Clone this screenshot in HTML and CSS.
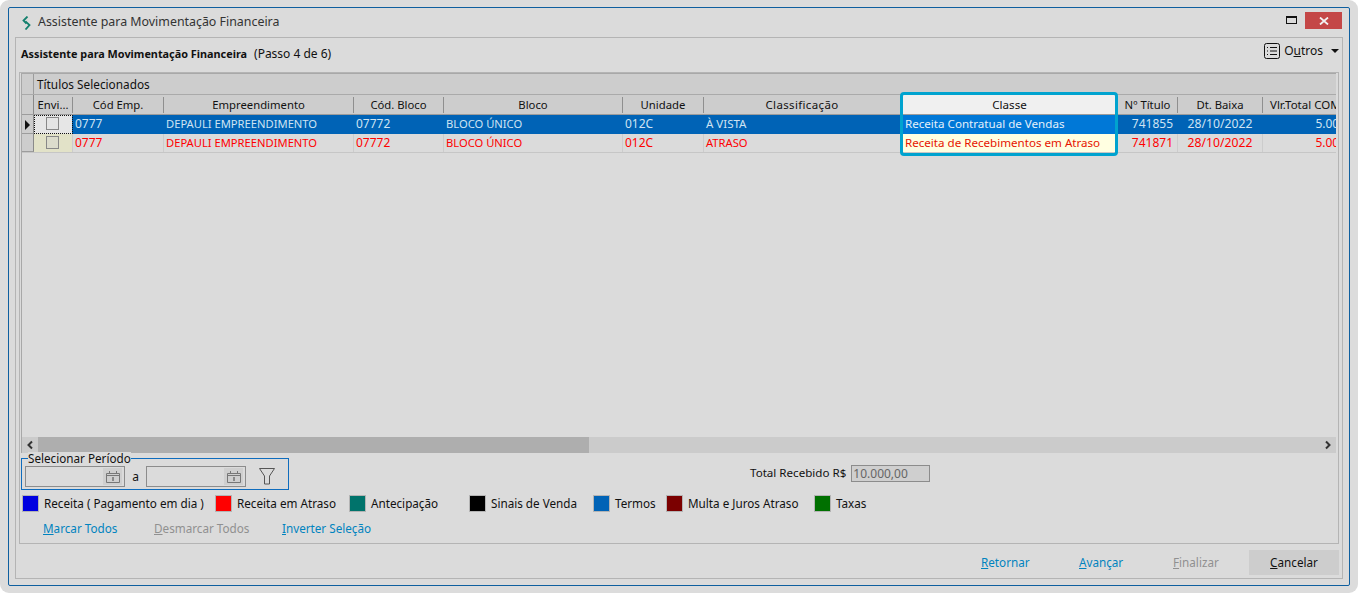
FILE: index.html
```html
<!DOCTYPE html>
<html lang="pt-BR">
<head>
<meta charset="utf-8">
<title>Assistente para Movimentação Financeira</title>
<link rel="stylesheet" href="styles.css">
</head>
<body>
<div class="frame">
  <div class="window">
    <header class="titlebar">
      <svg class="logo" width="9" height="14" viewBox="0 0 9 14"><path d="M5.500.5 1.500 4.500 4.500 7.500" fill="none" stroke="#14806e" stroke-width="1.800"/><path d="M3.500 5.500 7.500 9 3.500 13.500" fill="none" stroke="#14806e" stroke-width="1.800"/></svg>
      <span class="title">Assistente para Movimentação Financeira</span>
      <svg class="max" width="11" height="8" viewBox="0 0 11 8"><rect x=".5" y=".5" width="10" height="7" fill="none" stroke="#111"/><rect width="11" height="2" fill="#111"/></svg>
      <div class="close"><svg width="10" height="8" viewBox="0 0 10 8"><path d="M1 .5l8 7M9 .5l-8 7" stroke="#f2f2f2" stroke-width="1.800"/></svg></div>
    </header>
    <div class="panel">
      <div class="heading">
        <span class="heading-text"><b>Assistente para Movimentação Financeira</b><span class="step">(Passo 4 de 6)</span></span>
        <div class="outros">
          <svg width="16" height="16" viewBox="0 0 16 16"><rect x=".5" y=".5" width="15" height="15" rx="2" fill="none" stroke="#111"/><path d="M3 4.500h1M3 8h1M3 11.500h1M6 4.500h7M6 8h7M6 11.500h7" stroke="#111"/></svg>
          <span>O<u>u</u>tros</span>
          <i class="caret"></i>
        </div>
      </div>
      <div class="gridbox">
        <div class="grid">
          <div class="band"><div class="corner"></div><div class="band-text">Títulos Selecionados</div></div>
          <div class="row head">
            <div class="ind"></div>
            <div class="c c1">Envi...</div><div class="c c2">Cód Emp.</div><div class="c c3">Empreendimento</div><div class="c c4">Cód. Bloco</div><div class="c c5">Bloco</div><div class="c c6">Unidade</div><div class="c c7 wide">Classificação</div><div class="c c8 hl">Classe</div><div class="c c9">Nº Título</div><div class="c c10">Dt. Baixa</div><div class="c c11">Vlr.Total COMISSÃO</div>
          </div>
          <div class="row sel">
            <div class="ind"><i class="arrow"></i></div>
            <div class="c c1 focus"><i class="check"></i></div><div class="c c2 num">0777</div><div class="c c3 caps">DEPAULI EMPREENDIMENTO</div><div class="c c4 num">07772</div><div class="c c5 caps">BLOCO ÚNICO</div><div class="c c6 num">012C</div><div class="c c7">À VISTA</div><div class="c c8 hl">Receita Contratual de Vendas</div><div class="c c9 r num">741855</div><div class="c c10 m">28/10/2022</div><div class="c c11 r num">5.000,00</div>
          </div>
          <div class="row late">
            <div class="ind"></div>
            <div class="c c1 tint"><i class="check"></i></div><div class="c c2 num">0777</div><div class="c c3 caps">DEPAULI EMPREENDIMENTO</div><div class="c c4 num">07772</div><div class="c c5 caps">BLOCO ÚNICO</div><div class="c c6 num">012C</div><div class="c c7 caps">ATRASO</div><div class="c c8 hl">Receita de Recebimentos em Atraso</div><div class="c c9 r num">741871</div><div class="c c10 m">28/10/2022</div><div class="c c11 r num">5.000,00</div>
          </div>
          <div class="grid-empty"></div>
          <div class="hscroll">
            <div class="sbtn"><svg width="8" height="10" viewBox="0 0 8 10"><path d="M6 1.500 2.500 5 6 8.500" fill="none" stroke="#333" stroke-width="2"/></svg></div>
            <div class="thumb"></div>
            <div class="track"></div>
            <div class="sbtn"><svg width="8" height="10" viewBox="0 0 8 10"><path d="M2 1.500 5.500 5 2 8.500" fill="none" stroke="#333" stroke-width="2"/></svg></div>
          </div>
          <div class="callout"></div>
        </div>
        <div class="filter-row">
          <div class="period">
            <span class="period-label">Selecionar Período</span>
            <div class="date"><span class="cal"><svg width="14" height="12" viewBox="0 0 14 12"><path d="M.5 2.500h13v9H.5zM.5 4.500h13" fill="none" stroke="#777"/><path d="M3.500 0v2M10.500 0v2" stroke="#777"/><path d="M7 6v4" stroke="#444"/></svg></span></div>
            <span class="a">a</span>
            <div class="date"><span class="cal"><svg width="14" height="12" viewBox="0 0 14 12"><path d="M.5 2.500h13v9H.5zM.5 4.500h13" fill="none" stroke="#777"/><path d="M3.500 0v2M10.500 0v2" stroke="#777"/><path d="M7 6v4" stroke="#444"/></svg></span></div>
            <svg class="funnel" width="16" height="17" viewBox="0 0 16 17"><path d="M.5.500h15L10.500 8v8h-5V8z" fill="none" stroke="#555"/></svg>
          </div>
          <div class="total"><span class="total-label">Total Recebido R$</span><div class="total-box">10.000,00</div></div>
        </div>
        <div class="legend">
          <div class="li l1"><i class="sw blue"></i>Receita ( Pagamento em dia )</div>
          <div class="li l2"><i class="sw red"></i>Receita em Atraso</div>
          <div class="li l3"><i class="sw teal"></i>Antecipação</div>
          <div class="li l4"><i class="sw black"></i>Sinais de Venda</div>
          <div class="li l5"><i class="sw azure"></i>Termos</div>
          <div class="li l6"><i class="sw maroon"></i>Multa e Juros Atraso</div>
          <div class="li"><i class="sw green"></i>Taxas</div>
        </div>
        <div class="links">
          <a class="lnk m1"><u>M</u>arcar Todos</a>
          <a class="lnk off m2"><u>D</u>esmarcar Todos</a>
          <a class="lnk"><u>I</u>nverter Seleção</a>
        </div>
      </div>
      <div class="footer">
        <a class="lnk b1"><u>R</u>etornar</a>
        <a class="lnk b2"><u>A</u>vançar</a>
        <a class="lnk off b3"><u>F</u>inalizar</a>
        <a class="cancel"><u>C</u>ancelar</a>
      </div>
    </div>
  </div>
</div>
</body>
</html>
```
FILE: styles.css
```css
* { box-sizing: border-box; }
html, body { margin: 0; height: 100%; background: #fff; overflow: hidden; }
body { font: 11.5px/1.2 "Noto Sans", sans-serif; color: #111; }
.frame { width: 1358px; height: 593px; background: #dcdcdc; border-radius: 9px; padding: 7px 8px 7px 8px; }
.window { height: 579px; border: 1px solid #0f5f9f; border-radius: 2px; display: flex; flex-direction: column; background: #dbdbdb; }
.titlebar { height: 29px; display: flex; align-items: center; padding-left: 13px; flex: none; position: relative; }
.title { font-size: 12.4px; color: #333; margin-left: 7px; flex: 1; }
.max { margin-right: 8px; margin-top: -6px; }
.close { width: 37px; height: 17px; background: #c44747; margin: -4px 7px 0 0; display: flex; align-items: center; justify-content: center; }
.panel { flex: 1; margin: 0 6px 6px 6px; border: 1px solid #b4b4b4; display: flex; flex-direction: column; min-height: 0; }
.heading { height: 34px; flex: none; display: flex; justify-content: space-between; align-items: center; padding: 0 0 0 5px; }
.heading-text { margin-top: -1px; }
.heading-text b { font-size: 10.85px; }
.step { font-size: 12px; margin-left: 7px; }
.outros { display: flex; align-items: center; gap: 4px; font-size: 12px; padding-right: 3px; margin-top: -8px; }
.caret { width: 0; height: 0; border: 4px solid transparent; border-top: 4px solid #111; border-bottom: 0; margin-left: 4px; }
.gridbox { height: 472px; flex: none; border: 1px solid #b4b4b4; margin: 0 3px 0 3px; padding: 0; display: flex; flex-direction: column; }
.grid { height: 380px; margin: 0 0 0 1px; border: 1px solid #a8a8a8; border-right: 0; border-bottom: 0; flex: none; position: relative; display: flex; flex-direction: column; width: 1315px; overflow: hidden; }
.band { height: 21px; display: flex; background: #cdcdcd; border-bottom: 1px solid #aaa; flex: none; }
.corner { width: 12px; border-right: 1px solid #9c9c9c; background: #cdcdcd; }
.band-text { padding: 3px 0 0 3px; font-size: 11.8px; }
.row { display: flex; height: 19px; flex: none; white-space: nowrap; }
.ind { width: 12px; flex: none; background: #cdcdcd; border-right: 1px solid #8a8a8a; border-bottom: 1px solid #9c9c9c; position: relative; }
.arrow { position: absolute; left: 3px; top: 5px; border: 5px solid transparent; border-left: 5px solid #111; border-right: 0; }
.c { flex: none; overflow: hidden; padding: 2px 0 0 2px; border-right: 1px solid #ccc; }
.c1 { width: 39px; } .c2 { width: 91px; } .c3 { width: 190px; } .c4 { width: 90px; } .c5 { width: 179px; } .c6 { width: 81px; } .c7 { width: 197px; } .c8 { width: 217px; } .c9 { width: 60px; } .c10 { width: 85px; } .c11 { width: 105px; }
.num { font-size: 12px; line-height: 14px; }
.caps { font-size: 11.2px; line-height: 14px; }
.r { text-align: right; padding: 2px 4px 0 0; }
.m { text-align: center; padding: 2px 0 0; font-size: 12.2px; line-height: 14px; }
.head { background: #cdcdcd; border-bottom: 1px solid #9c9c9c; height: 20px; font-size: 11.300px; }
.head .ind { border-bottom: 0; }
.head .c { text-align: center; border-right: 1px solid #8f8f8f; margin: 2px 0 0; height: 16px; line-height: 16px; padding: 0; }
.head .c.wide { font-size: 11.500px; letter-spacing: .35px; }
.head .c.c11 { text-align: left; padding-left: 7px; font-size: 11.500px; border-right: 0; }
.head .c.hl { background: #f0f0f0; border-right: 0; margin: 0; height: 19px; padding: 2px 0 0; line-height: 16px; }
.c8.hl { padding-left: 4px; font-size: 11.600px; }
.sel .c { background: #0063b6; color: #cfe3f3; border-right-color: #0063b6; height: 19px; }
.sel .c.hl { background: #0078d7; color: #e4f0fa; }
.late { border-bottom: 1px solid #c6c6c6; height: 19px; }
.late .c { color: #f00; height: 18px; border-right-color: #ccc; }
.late .c.hl { background: #ffffe1; color: #e61500; }
.sel .c.focus { background: #e6e6e6; outline: 1px dotted #111; outline-offset: -1px; position: relative; }
.late .c.tint { background: #e2e2c8; }
.check { display: block; width: 13px; height: 13px; border: 1px solid #888; margin: 0 0 0 10px; background: #e4e4e4; }
.tint .check { background: #dcdccc; }
.grid-empty { flex: 1; }
.hscroll { height: 16px; flex: none; display: flex; background: #cbcbcb; }
.sbtn { width: 16px; flex: none; display: flex; align-items: center; justify-content: center; }
.thumb { width: 551px; background: #aeaeae; flex: none; }
.track { flex: 1; }
.callout { position: absolute; left: 878px; top: 18px; width: 218px; height: 64px; border: 3px solid #00a3cf; border-radius: 4px; pointer-events: none; }
.filter-row { height: 36px; flex: none; display: flex; position: relative; padding: 0 0 0 1px; }
.period { width: 268px; height: 32px; margin: 5px 0 0; padding: 7px 0 0 3px; border: 1px solid #0f6cbd; display: flex; align-items: flex-start; position: relative; }
.period-label { position: absolute; left: 6px; top: -7px; font-size: 11.700px; line-height: 13px; background: #dbdbdb; }
.date { width: 100px; height: 21px; border: 1px solid #8c8c8c; display: flex; justify-content: flex-end; padding: 1px 2px 0 0; flex: none; }
.cal { width: 19px; height: 17px; background: #cfcfcf; display: flex; align-items: center; justify-content: center; }
.a { width: 21px; text-align: center; padding-top: 4px; flex: none; font-size: 12px; }
.funnel { margin: 2px 0 0 13px; }
.total { position: absolute; left: 730px; top: 12px; display: flex; align-items: center; gap: 5px; font-size: 11.600px; }
.total-label { margin-top: -2px; }
.total-box { width: 79px; height: 17px; border: 1px solid #8c8c8c; background: #cfcfcf; color: #666; padding-left: 1px; line-height: 16px; font-size: 12px; }
.legend { display: flex; height: 17px; margin: 6px 0 0 2px; flex: none; align-items: center; white-space: nowrap; font-size: 11.700px; }
.li { display: flex; align-items: center; }
.sw { width: 17px; height: 17px; border: 1px solid #b4b4b4; margin-right: 5px; flex: none; }
.blue { background: #0000e0; } .red { background: #f00; } .teal { background: #00736b; } .black { background: #000; } .azure { background: #0063b6; } .maroon { background: #7b0000; } .green { background: #007000; }
.l1 { width: 193px; } .l2 { width: 134px; } .l3 { width: 120px; } .l4 { width: 124px; } .l5 { width: 73px; } .l6 { width: 148px; }
.links { display: flex; margin: 9px 0 0 23px; flex: none; font-size: 11.700px; }
.lnk { color: #0083bf; white-space: nowrap; }
.off { color: #909090; }
.m1 { width: 111px; } .m2 { width: 128px; }
.footer { flex: 1; display: flex; align-items: flex-start; padding: 6px 3px 0 0; font-size: 11.700px; line-height: 24px; }
.b1 { margin-left: auto; width: 98px; } .b2 { width: 94px; } .b3 { width: 76px; }
.cancel { width: 90px; height: 25px; background: #cdcdcd; text-align: center; }
```
